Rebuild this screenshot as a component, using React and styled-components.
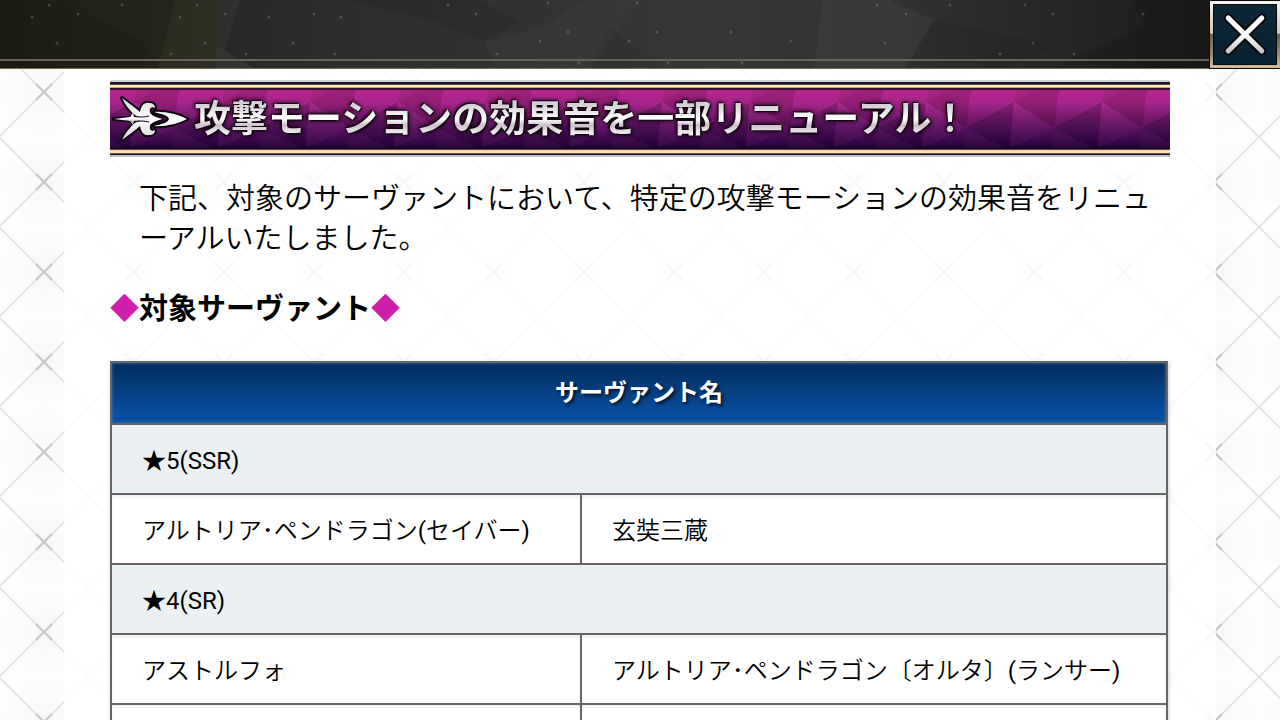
import React from 'react';
import styled, { createGlobalStyle } from 'styled-components';

// 90px lattice tile, the cross sits in its centre
const lattice = `<svg xmlns="http://www.w3.org/2000/svg" width="90" height="90">
<defs><radialGradient id="g"><stop offset="0" stop-color="#f8f8f8"/><stop offset="1" stop-color="#fdfdfd"/></radialGradient></defs>
<rect width="90" height="90" fill="url(#g)"/>
<path d="M0 0L90 90M90 0L0 90" stroke="#e4e4e4" stroke-width="1.8"/>
<path d="M37 37L53 53M53 37L37 53" stroke="#c8c8c8" stroke-width="2.2"/></svg>`

const latticeUrl = `url("data:image/svg+xml,${encodeURIComponent(lattice)}")`

const GlobalStyle = createGlobalStyle`
  * {
    box-sizing: border-box;
  }
  html {
    scrollbar-width: none;
  }
  body {
    margin: 0;
    color: #000;
    font-family: Roboto, "Noto Sans CJK JP", sans-serif;
    background: #fcfcfc ${latticeUrl} -1px 47px;
  }
`

const TopBar = styled.header`
  display: flex;
  justify-content: flex-end;
  position: relative;
  height: 69px;
  background: linear-gradient(90deg, #1d1d1a 0%, #252523 14%, #2e2e2e 28%, #363636 55%, #323232 70%, #1d1d1d 92%, #191914 100%);
`

const TopArt = styled.svg`
  position: absolute;
  inset: 0;
  width: 100%;
  height: 100%;
`

const CloseButton = styled.button`
  position: relative;
  width: 71px;
  height: 69px;
  padding: 3px;
  border: 1px solid #0a0a0a;
  border-right: 0;
  background: linear-gradient(#f4f2ef 0%, #d8c6b2 48%, #6e5f50 50%, #a08a70 80%, #d8bd98 100%);
  cursor: pointer;
  line-height: 0;

  svg {
    width: 100%;
    height: 100%;
    border: 1px solid #050a0e;
    background: linear-gradient(#0e2737, #092130);
  }
`

const Panel = styled.main`
  width: 90%;
  margin: 0 auto;
  padding: 11px 46px 40px;
  background: rgba(255, 255, 255, 0.85);
`

const Banner = styled.div`
  display: flex;
  align-items: center;
  position: relative;
  height: 77px;
  background: linear-gradient(
    #d0d0d0 0 2px, #1c1420 2px 4px, #55404c 4px 5px, #fff0b4 5px 7px, #c8a070 7px 8px, #3c1030 8px 10px,
    #b8268f 10px, #a4248a 24px, #6d1868 40px, #4a0c58 54px, #2c0440 65px, #160220 69px,
    #5c4654 69px 70px, #ffe0a0 70px 73px, #6c5464 73px 74px, #120c18 74px 75px, #c4c4c4 75px 77px
  );
`

const Facets = styled.svg`
  position: absolute;
  top: 10px;
  left: 0;
  width: 100%;
  height: 58px;
`

const Emblem = styled.svg`
  position: relative;
  flex: none;
  width: 80px;
  height: 50px;
  margin-left: 2px;
`

const BannerTitle = styled.h1`
  position: relative;
  margin: 2px 0 0 2px;
  font-size: 37px;
  line-height: 52px;
  font-weight: 700;
  white-space: nowrap;
  color: transparent;
  background: linear-gradient(#d6d0d6 22%, #fff 48%, #cdbfca 60%, #fff 82%);
  background-clip: text;
  filter: drop-shadow(1px 1px 0 #10060f) drop-shadow(-1px -1px 0 #10060f) drop-shadow(0 0 2px #000);
`

const Lead = styled.p`
  margin: 22px 0 0;
  padding-left: 29px;
  font-size: 29px;
  font-weight: 350;
  line-height: 40px;
  line-break: loose;
`

const SubTitle = styled.h2`
  margin: 30px 0 32px;
  font-size: 29px;
  line-height: 40px;
  font-weight: 700;
`

const Diamond = styled.span`
  color: #cf1eab;
`

const Table = styled.table`
  width: calc(100% - 2px);
  table-layout: fixed;
  border-collapse: collapse;
  font-size: 24px;
  line-height: 40px;
  box-shadow: 1px 1px 4px rgba(0, 0, 0, 0.2);
`

const NameCol = styled.col`
  width: ${props => props.$width};
`

const HeadCell = styled.th`
  padding: 10px 30px;
  border: 2px solid #666;
  color: #fff;
  font-weight: 700;
  text-align: center;
  text-shadow: 2px 2px 3px rgba(0, 0, 0, 0.7);
  background: linear-gradient(#022c5c, #0a4d9e 85%);
  box-shadow: inset 0 0 3px 1px rgba(110, 160, 210, 0.35);
`

const RankCell = styled.th`
  padding: 16px 30px 12px;
  border: 2px solid #666;
  font-weight: 400;
  text-align: left;
  background: #ebf0f3;
`

const NameCell = styled.td`
  height: 70px;
  padding: 16px 30px 12px;
  border: 2px solid #666;
  font-family: Roboto, "Noto Sans CJK JP DemiLight", "Noto Sans CJK JP", sans-serif;
  background: #fff;
  box-shadow: inset 0 3px 3px rgba(0, 0, 0, 0.06);
`

const groups = [
  {
    rank: '★5(SSR)',
    rows: [['アルトリア･ペンドラゴン(セイバー)', '玄奘三蔵']],
  },
  {
    rank: '★4(SR)',
    rows: [
      ['アストルフォ', 'アルトリア･ペンドラゴン〔オルタ〕(ランサー)'],
      ['', ''],
    ],
  },
]

const dots = [
  [49, 5], [122, 5], [197, 5], [78, 14], [32, 17], [180, 17], [57, 43], [205, 43], [171, 54], [246, 54],
  [225, 14], [269, 17], [293, 43], [335, 54], [314, 14], [341, 17], [448, 5], [476, 14], [548, 3], [637, 3],
  [568, 32], [657, 32], [731, 32], [540, 41], [629, 41], [791, 41], [497, 54], [579, 63], [668, 63], [742, 63],
  [877, 5], [950, 5], [1025, 5], [906, 14], [1053, 14], [1143, 14], [885, 43], [1033, 43], [1000, 54], [1074, 54],
]

const TopBackground = () => (
  <TopArt viewBox="0 0 1280 69" preserveAspectRatio="none" aria-hidden="true">
    <rect width="216" height="69" fill="#26260a" opacity="0.3" />
    <path d="M175 0H216V69H158Z" fill="#8a8a60" opacity="0.08" />
    <path d="M0 0H60L140 40L165 69H0Z" fill="#000" opacity="0.06" />
    <path d="M240 0L225 50L216 45V0Z" fill="#fff" opacity="0.04" />
    <path d="M216 45L255 69H216Z" fill="#fff" opacity="0.06" />
    <path d="M350 0H480L520 22L485 42L430 20Z" fill="#000" opacity="0.07" />
    <path d="M485 42L540 28L585 0H640L590 69H495Z" fill="#fff" opacity="0.02" />
    <path d="M609 26L660 69H590Z" fill="#000" opacity="0.05" />
    <path d="M822 0H890L934 20L905 69H814Z" fill="#fff" opacity="0.03" />
    <path d="M934 20L1060 45L1000 69H905Z" fill="#000" opacity="0.05" />
    <path d="M1130 0H1210V69H1050L1145 25Z" fill="#000" opacity="0.1" />
    {dots.map(([x, y]) => (
      <circle key={`${x}-${y}`} cx={x} cy={y} r="1.5" fill="#8c9690" opacity="0.35" />
    ))}
    <rect y="59" width="1280" height="2" fill="#66645a" />
    <rect y="68" width="1280" height="1" fill="#746b55" />
  </TopArt>
)

const BannerFacets = () => (
  <Facets aria-hidden="true">
    <defs>
      <pattern id="facets" width="88" height="58" patternUnits="userSpaceOnUse" x="69">
        {[0, 88].map(x => (
          <g key={x} transform={`translate(${x})`}>
            <path d="M-43 0H0L-5 38L-45 12Z" fill="#300018" opacity="0.18" />
            <path d="M-45 12L-22 0H-43Z" fill="#ff7ad8" opacity="0.06" />
            <path d="M-5 38L43 12L38 58H-8Z" fill="#10001c" opacity="0.2" />
            <path d="M-5 38L34 58H-8Z" fill="#ff7ad8" opacity="0.05" />
            <path d="M-45 12L-5 38L-49 58Z" fill="#ff7ad8" opacity="0.05" />
          </g>
        ))}
      </pattern>
    </defs>
    <rect width="100%" height="58" fill="url(#facets)" />
  </Facets>
)

const ArrowEmblem = () => (
  <Emblem viewBox="0 0 80 50" aria-hidden="true">
    <defs>
      <linearGradient id="silver" x1="0" y1="3" x2="0" y2="47" gradientUnits="userSpaceOnUse">
        <stop offset="0" stopColor="#d8d4d8" />
        <stop offset="0.5" stopColor="#fff" />
        <stop offset="0.55" stopColor="#c0b2c0" />
        <stop offset="1" stopColor="#e8e0e8" />
      </linearGradient>
      <path
        id="wing"
        d="M10 4C16 9 23 13 28 18C29 12 32 8 37 9C41 9 43 11 43 14C40 12 37 14 38 18C38 21 44 23 50 25H38C32 25 27 24 24 22C18 17 13 11 10 4Z"
      />
      <path id="blade" d="M42 18C52 17 66 20 75 25H57C56 21 49 20 42 18Z" />
    </defs>
    <g stroke="#0c040e" strokeWidth="4" strokeLinejoin="round">
      <use href="#wing" />
      <use href="#blade" />
      <g transform="translate(0 50) scale(1 -1)">
        <use href="#wing" />
        <use href="#blade" />
      </g>
      <path d="M2 25L18 24L22 20L24 25L22 30L18 26Z" />
    </g>
    <g fill="url(#silver)">
      <use href="#wing" />
      <use href="#blade" />
      <g transform="translate(0 50) scale(1 -1)">
        <use href="#wing" />
        <use href="#blade" />
      </g>
      <path d="M2 25L18 23L21 19L22 23L52 25L22 27L21 31L18 27Z" />
    </g>
    <path d="M23 22C29 24 33 23 37 22M23 28C29 26 33 27 37 28" fill="none" stroke="#201020" strokeWidth="1.2" />
  </Emblem>
)

const App = () => {
  return (
    <>
      <GlobalStyle />
      <TopBar>
        <TopBackground />
        <CloseButton type="button" aria-label="閉じる">
          <svg viewBox="0 0 61 59" preserveAspectRatio="none">
            <defs>
              <linearGradient id="cross" x1="0" y1="10" x2="0" y2="50" gradientUnits="userSpaceOnUse">
                <stop offset="0.5" stopColor="#fff" />
                <stop offset="1" stopColor="#bcbcbc" />
              </linearGradient>
            </defs>
            <path d="M14 13L47 46M47 13L14 46" stroke="#05080b" strokeWidth="9" strokeLinecap="round" />
            <path d="M14 13L47 46M47 13L14 46" stroke="url(#cross)" strokeWidth="5" strokeLinecap="round" />
          </svg>
        </CloseButton>
      </TopBar>
      <Panel>
        <Banner>
          <BannerFacets />
          <ArrowEmblem />
          <BannerTitle>攻撃モーションの効果音を一部リニューアル！</BannerTitle>
        </Banner>
        <Lead>
          下記、対象のサーヴァントにおいて、特定の攻撃モーションの効果音をリニューアルいたしました。
        </Lead>
        <SubTitle>
          <Diamond>◆</Diamond>対象サーヴァント<Diamond>◆</Diamond>
        </SubTitle>
        <Table>
          <colgroup>
            <NameCol $width="44.5%" />
            <NameCol $width="55.5%" />
          </colgroup>
          <thead>
            <tr>
              <HeadCell colSpan={2} scope="col">サーヴァント名</HeadCell>
            </tr>
          </thead>
          {groups.map(group => (
            <tbody key={group.rank}>
              <tr>
                <RankCell colSpan={2} scope="rowgroup">{group.rank}</RankCell>
              </tr>
              {group.rows.map(([left, right], index) => (
                <tr key={index}>
                  <NameCell>{left}</NameCell>
                  <NameCell>{right}</NameCell>
                </tr>
              ))}
            </tbody>
          ))}
        </Table>
      </Panel>
    </>
  )
}

export default App
